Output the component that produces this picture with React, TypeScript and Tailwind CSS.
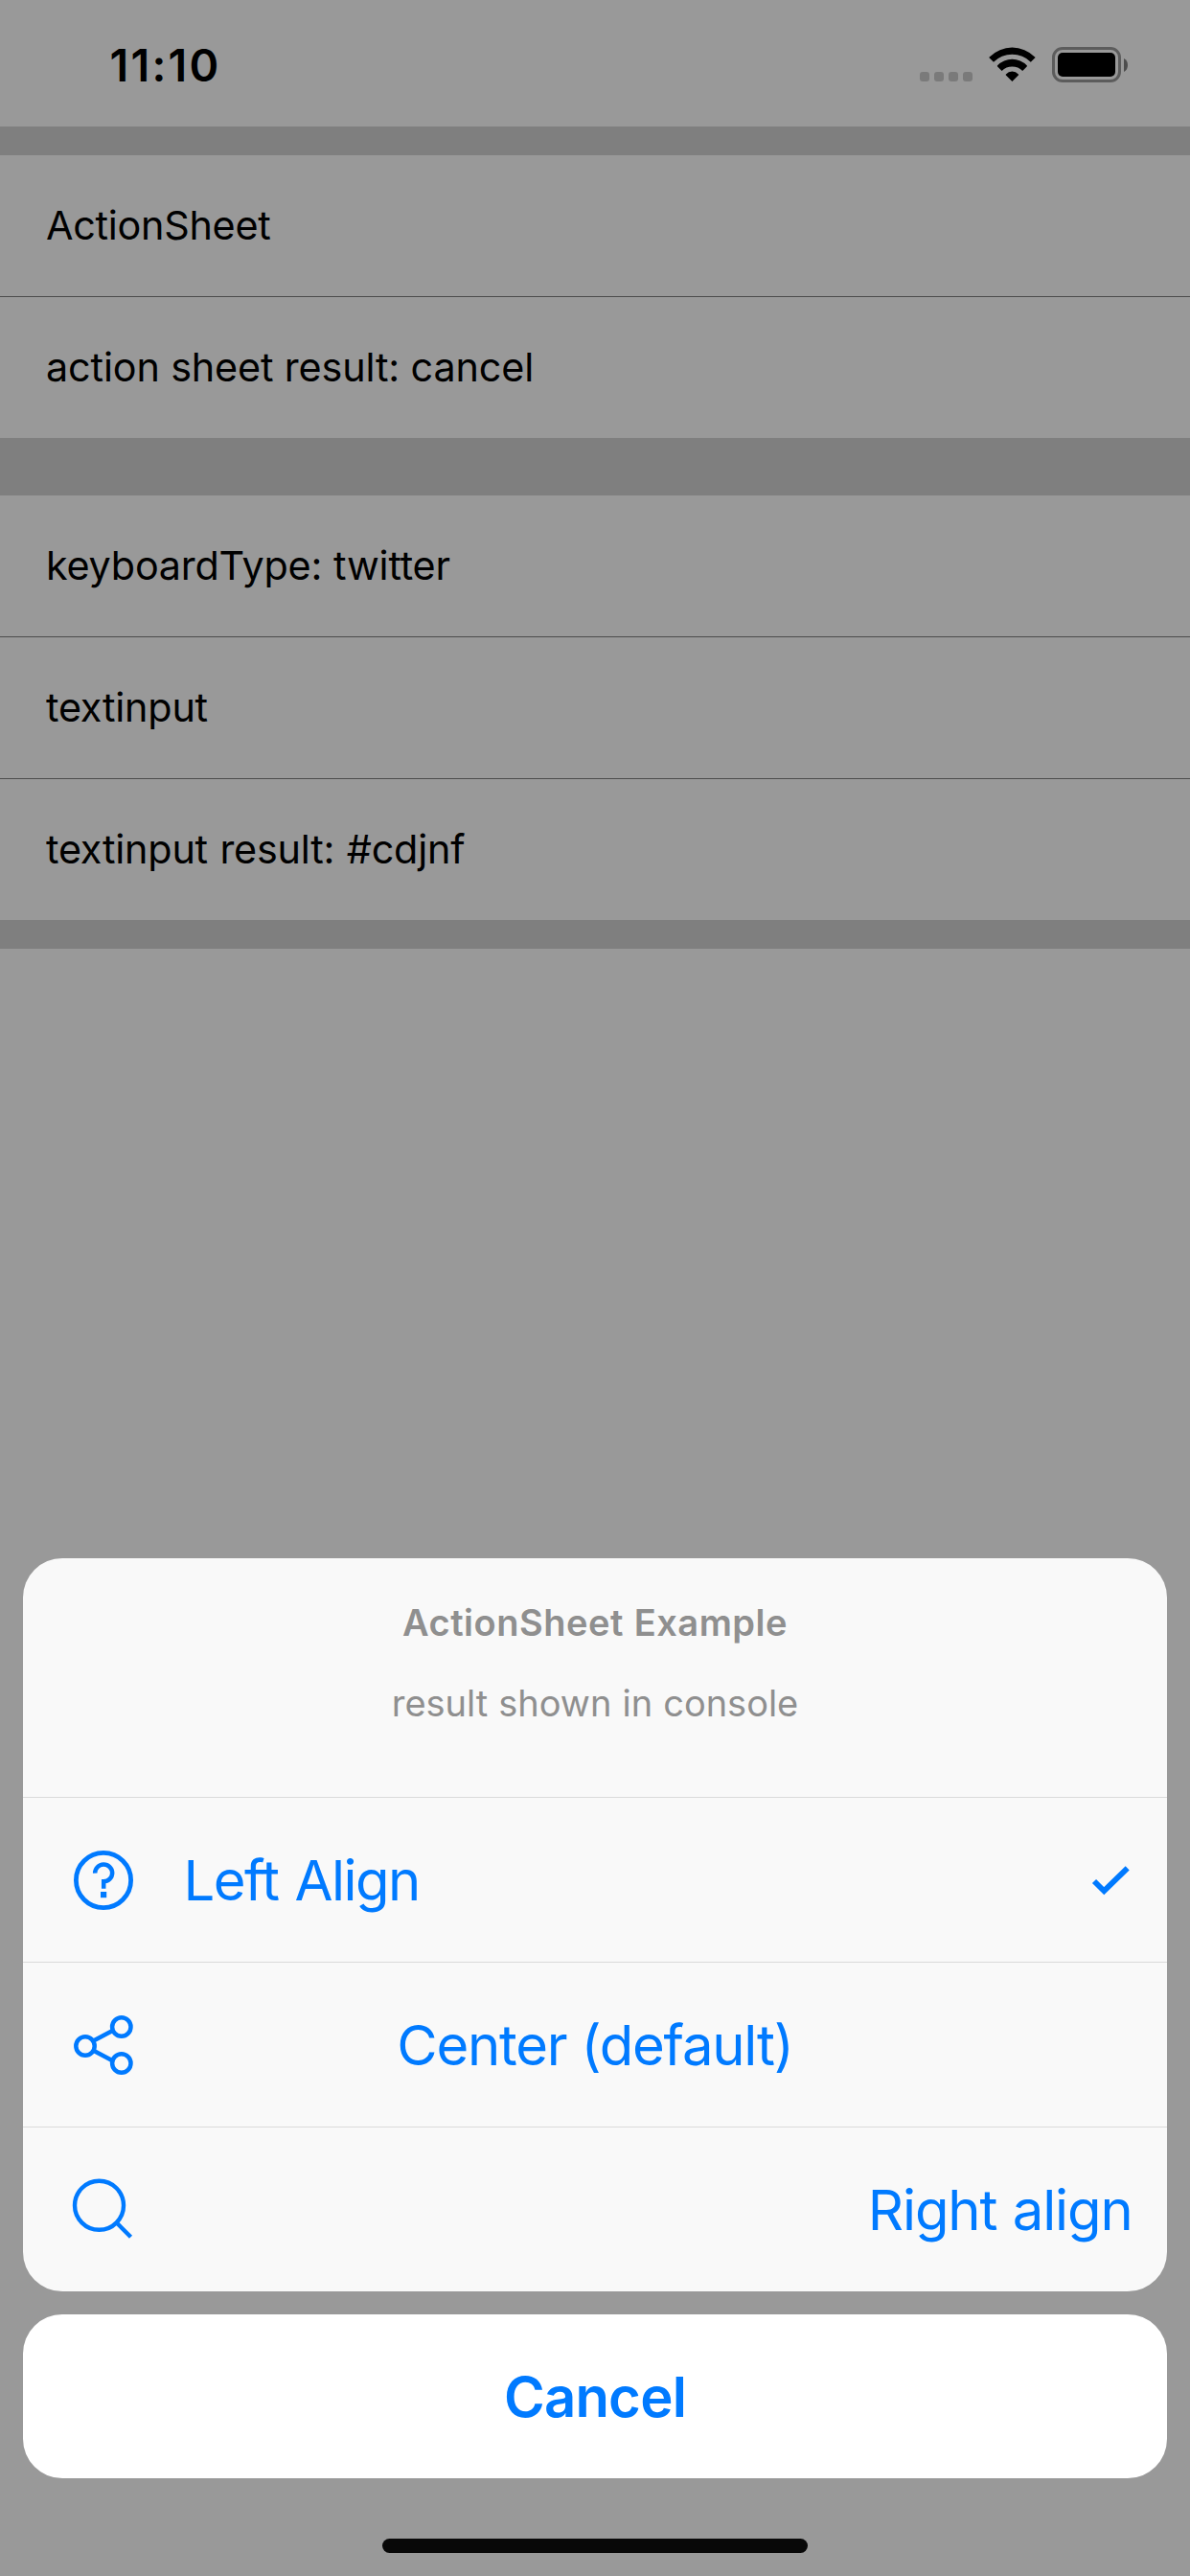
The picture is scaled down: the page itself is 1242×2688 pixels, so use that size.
import type { ReactNode } from "react";

function StatusBar() {
  return (
    <header className="flex h-[132px] items-start justify-between pl-[114.5px] pr-[65px]">
      <span className="mt-[44px] text-[46.6px] leading-[48px] font-semibold tracking-[2.26px]">11:10</span>
      <div className="mt-[49px] flex h-[37px]">
        <div className="mt-[26px] mr-[17px] flex gap-[5px]">
          {[0, 1, 2, 3].map((i) => (
            <span key={i} className="size-[10px] rounded-[3px] bg-[#7a7a7a]" />
          ))}
        </div>
        <svg className="mr-[17px] h-[36px] w-[49px]" viewBox="0 0 49 36" fill="#000">
          <path d="M0.7 11.6Q-0.1 11 0.7 10.4A33.6 33.6 0 0 1 48.1 10.4Q48.9 11 48.1 11.6L43.8 15.7A27.4 27.4 0 0 0 5 15.7Z" />
          <path d="M9.1 20.4Q8.6 19.9 9.1 19.3A21.3 21.3 0 0 1 39.7 19.3Q40.2 19.9 39.7 20.4L35.2 24.9A15.6 15.6 0 0 0 13.6 24.9Z" />
          <path d="M17.9 29.5Q17.4 28.9 17.9 28.4A9 9 0 0 1 30.9 28.4Q31.4 28.9 30.9 29.5L24.4 36Z" />
        </svg>
        <div className="h-[37px] w-[72px] rounded-[11px] border-[3px] border-[#5c5c5c] p-[3px]">
          <div className="h-full w-full rounded-[5px] bg-black" />
        </div>
        <svg className="mt-[11.5px] ml-[3px] h-[14px] w-[4px]" viewBox="0 0 4 14" fill="#4d4d4d">
          <path d="M0 0Q4 2.2 4 7T0 14Z" />
        </svg>
      </div>
    </header>
  );
}

function Row({ children, last }: { children: ReactNode; last?: boolean }) {
  return (
    <div className={last ? "h-[147px]" : "h-[148px] border-b border-[#4c4c4c]"}>
      <p className="pl-12 text-[41.3px] leading-[146px]">{children}</p>
    </div>
  );
}

function HelpIcon() {
  return (
    <svg className="ml-12 h-[71px] w-[72px] shrink-0" viewBox="0 0 72 71" fill="none" stroke="#007aff">
      <circle cx="36" cy="36" r="28.6" strokeWidth="4.8" />
      <path d="M27.2 28.6A9 8.9 0 1 1 36.2 37.3V44.7" strokeWidth="4.5" />
      <rect x="33" y="48" width="6.2" height="6.2" fill="#007aff" stroke="none" />
    </svg>
  );
}

function ShareIcon() {
  return (
    <svg className="ml-12 h-[71px] w-[72px] shrink-0" viewBox="0 0 72 71" fill="none" stroke="#007aff" strokeWidth="4.5">
      <circle cx="17" cy="37" r="9.7" />
      <circle cx="54.8" cy="17" r="9.7" />
      <circle cx="54.8" cy="55" r="9.7" />
      <path d="M25.6 31.6L45.4 20.9M25.6 41.8L45.4 52.3" />
    </svg>
  );
}

function SearchIcon() {
  return (
    <svg className="ml-12 h-[71px] w-[72px] shrink-0" viewBox="0 0 72 71" fill="none" stroke="#007aff" strokeWidth="4.4">
      <circle cx="31.5" cy="31.3" r="25.5" />
      <path d="M49.8 49.5L64.5 64.3" />
    </svg>
  );
}

const option = "flex h-[172px] items-center border-t border-[#dadada] text-[58px] leading-[70px] text-[#007aff]";

function ActionSheet() {
  return (
    <div className="absolute inset-x-0 bottom-0 flex flex-col items-center px-6 pb-6">
      <section className="w-full overflow-hidden rounded-[41px] bg-[#f9f9f9]">
        <div className="flex h-[249px] flex-col items-center gap-9 pt-[43px] text-[38px] leading-[48px] text-[#8f8f8f]">
          <h2 className="font-semibold tracking-[0.5px] [word-spacing:0.9px]">ActionSheet Example</h2>
          <p className="tracking-[-0.03px] [word-spacing:0.5px]">result shown in console</p>
        </div>
        <div className={option}>
          <HelpIcon />
          <span className="ml-[47.5px] flex-1 tracking-[-1.5px] [word-spacing:2px]">Left Align</span>
          <svg className="mr-9 h-[71px] w-[46px]" viewBox="0 0 46 71" fill="none" stroke="#007aff" strokeWidth="5.8">
            <path d="M6 37L16.3 47.2L40.7 23.4" />
          </svg>
        </div>
        <div className={option}>
          <ShareIcon />
          <span className="mr-[120px] flex-1 text-center tracking-[-1.24px]">Center (default)</span>
        </div>
        <div className={option}>
          <SearchIcon />
          <span className="mr-[36.5px] flex-1 text-right tracking-[-1.16px] [word-spacing:1.4px]">Right align</span>
        </div>
      </section>
      <button className="mt-6 h-[171px] w-full rounded-[41px] bg-white text-[58px] leading-[70px] font-semibold tracking-[-0.78px] text-[#007aff]">
        Cancel
      </button>
      <div className="mt-[63px] h-[15px] w-[444px] rounded-full bg-[#080808]" />
    </div>
  );
}

export default function App() {
  return (
    <div className="relative h-[2688px] w-[1242px] overflow-hidden bg-[#999] font-[Inter,sans-serif] text-black">
      <StatusBar />
      <main>
        <div className="h-[30px] bg-[#7f7f7f]" />
        <Row>
          <span className="tracking-[-0.26px]">ActionSheet</span>
        </Row>
        <Row last>
          <span className="tracking-[-0.13px]">action sheet result: cancel</span>
        </Row>
        <div className="h-[60px] bg-[#7f7f7f]" />
        <Row>
          <span className="tracking-[-0.2px] [word-spacing:0.5px]">keyboardType: twitter</span>
        </Row>
        <Row>
          <span className="tracking-[-0.2px]">textinput</span>
        </Row>
        <Row last>
          <span className="tracking-[-0.2px] [word-spacing:1.1px]">textinput result: #cdjnf</span>
        </Row>
        <div className="h-[30px] bg-[#7f7f7f]" />
      </main>
      <ActionSheet />
    </div>
  );
}
